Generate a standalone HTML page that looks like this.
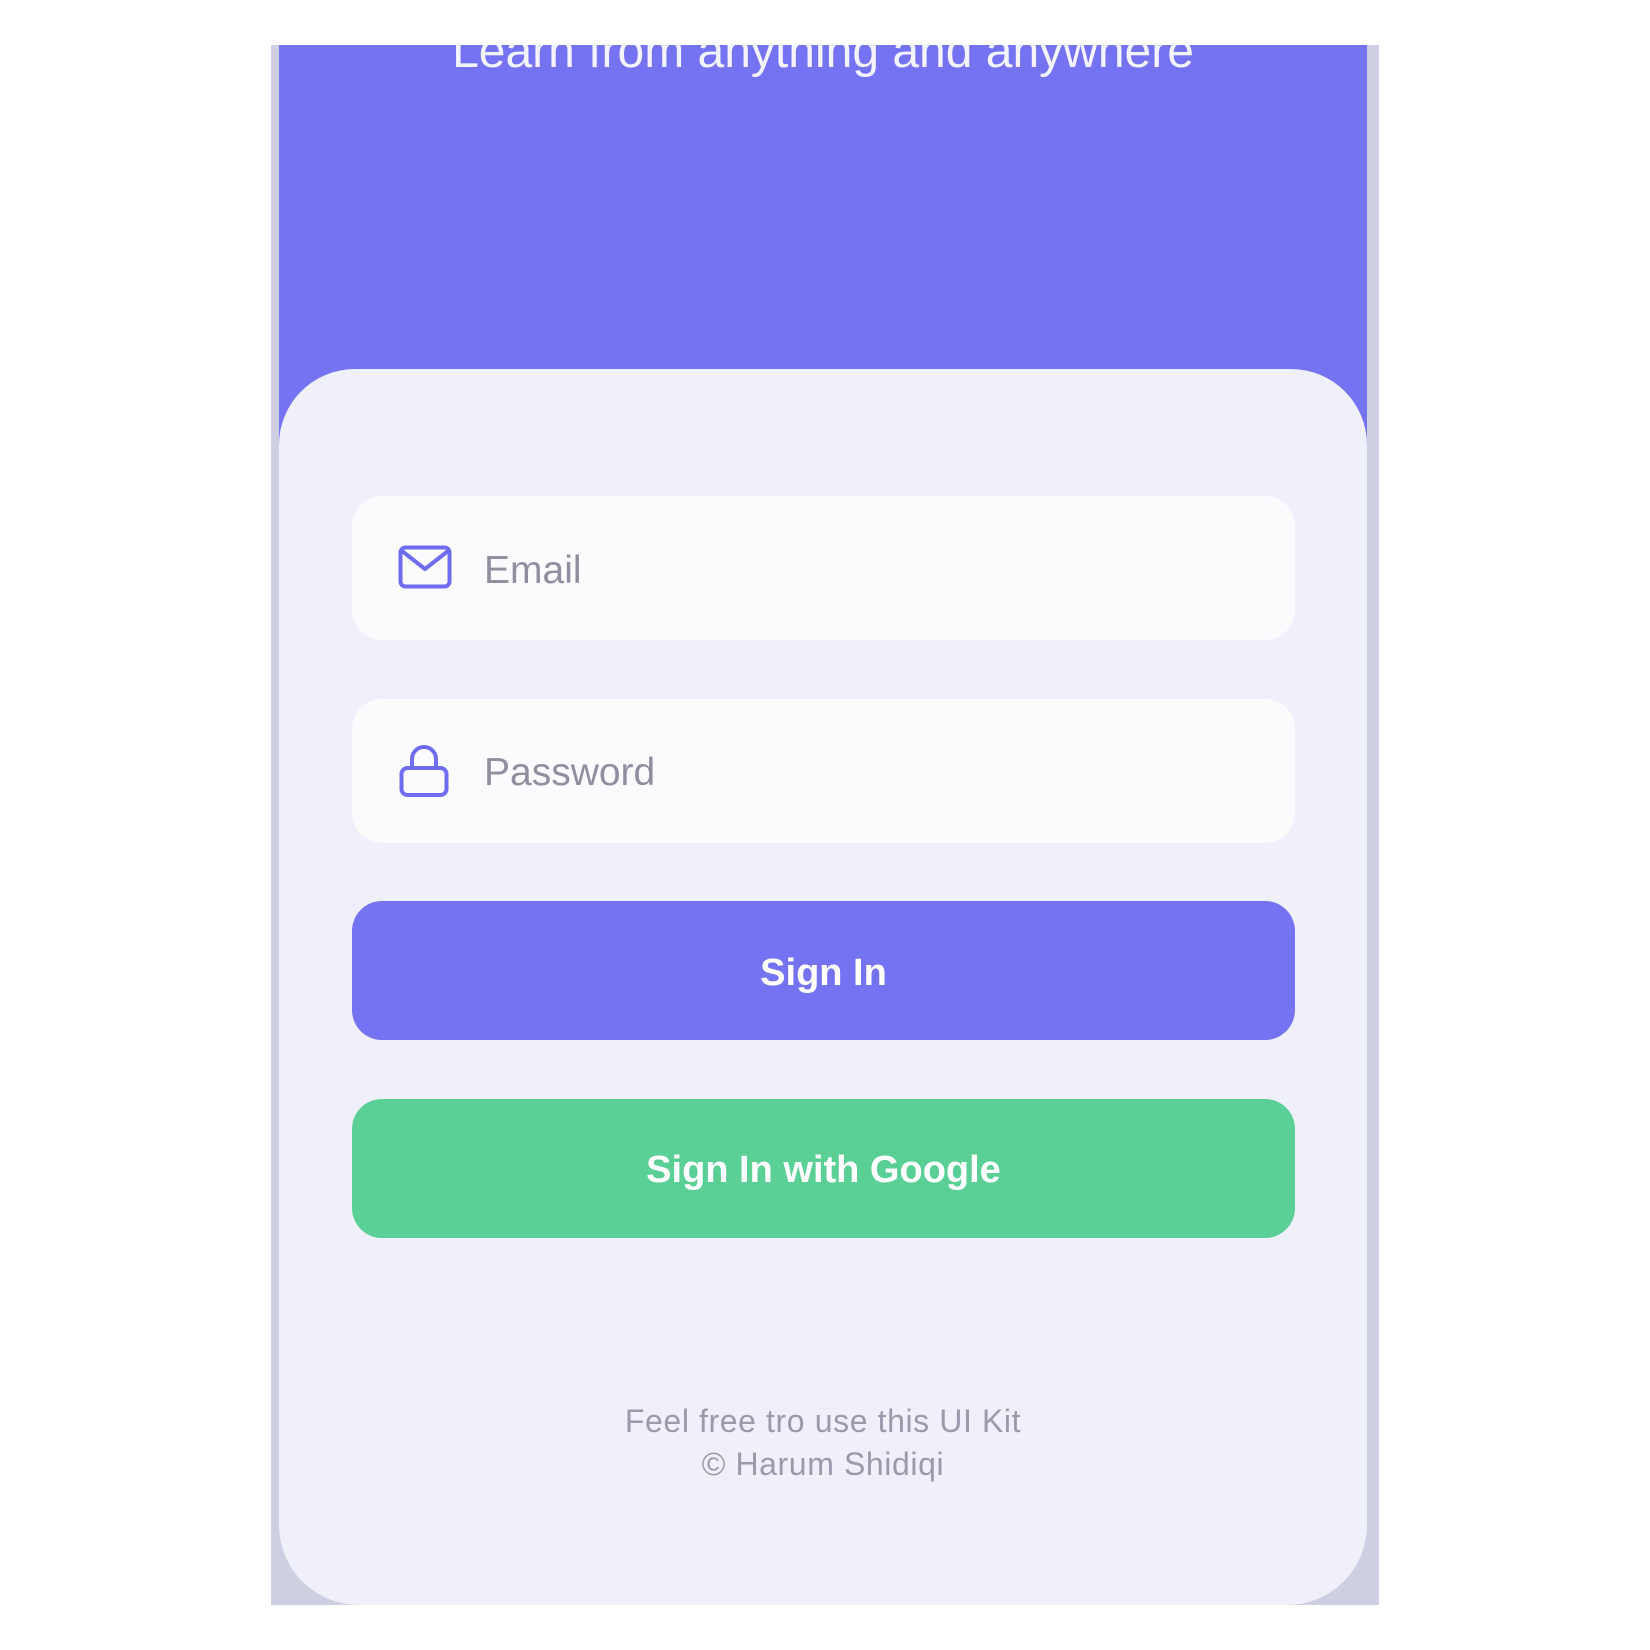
<!DOCTYPE html>
<html><head><meta charset="utf-8"><style>
html,body{margin:0;padding:0;width:1650px;height:1650px;background:#fff;overflow:hidden;font-family:"Liberation Sans",sans-serif}
.a{position:absolute}
.frame{left:271px;top:45px;width:1108px;height:1560px;background:#cfcfe2}
.hero{left:279px;top:45px;width:1088px;height:420px;background:#7673f3;overflow:hidden}
.title{left:0;width:1088px;top:-21px;text-align:center;color:#f4f4ff;font-size:48px;line-height:56px;white-space:nowrap}
.card{left:279px;top:369px;width:1088px;height:1236px;background:#f0f0fa;border-radius:76px 76px 80px 80px}
.inp{left:352px;width:943px;height:144px;background:#fbfbfe;border-radius:30px}
.ph{position:absolute;left:132px;color:#8f8fa0;font-size:39px;line-height:44px}
.btn{left:352px;width:943px;border-radius:30px;color:#fff;font-weight:bold;font-size:38px;text-align:center}
.foot{left:279px;width:1088px;top:1400px;text-align:center;color:#9a9aab;font-size:32px;letter-spacing:0.6px;line-height:43px}
</style></head><body>
<div class="a frame"></div>
<div class="a hero"><div class="a title">Learn from anything and anywhere</div></div>
<div class="a card"></div>
<div class="a inp" style="top:496px">
  <svg class="a" style="left:46px;top:49px" width="54" height="44" viewBox="0 0 54 44"><rect x="2.5" y="2.5" width="49" height="39" rx="5" fill="none" stroke="#6f6cf0" stroke-width="4"/><path d="M4 6 L27 24 L50 6" fill="none" stroke="#6f6cf0" stroke-width="4" stroke-linejoin="round"/></svg>
  <div class="ph" style="top:53px">Email</div>
</div>
<div class="a inp" style="top:699px">
  <svg class="a" style="left:47px;top:45px" width="50" height="54" viewBox="0 0 50 54"><rect x="2.5" y="24" width="45" height="27" rx="6" fill="none" stroke="#6f6cf0" stroke-width="4"/><path d="M13 24 V15 a12 12 0 0 1 24 0 V24" fill="none" stroke="#6f6cf0" stroke-width="4"/></svg>
  <div class="ph" style="top:52px">Password</div>
</div>
<div class="a btn" style="top:901px;height:139px;line-height:145px;background:#7673f3">Sign In</div>
<div class="a btn" style="top:1099px;height:139px;line-height:142px;background:#5acf96">Sign In with Google</div>
<div class="a foot">Feel free tro use this UI Kit<br>© Harum Shidiqi</div>
</body></html>
